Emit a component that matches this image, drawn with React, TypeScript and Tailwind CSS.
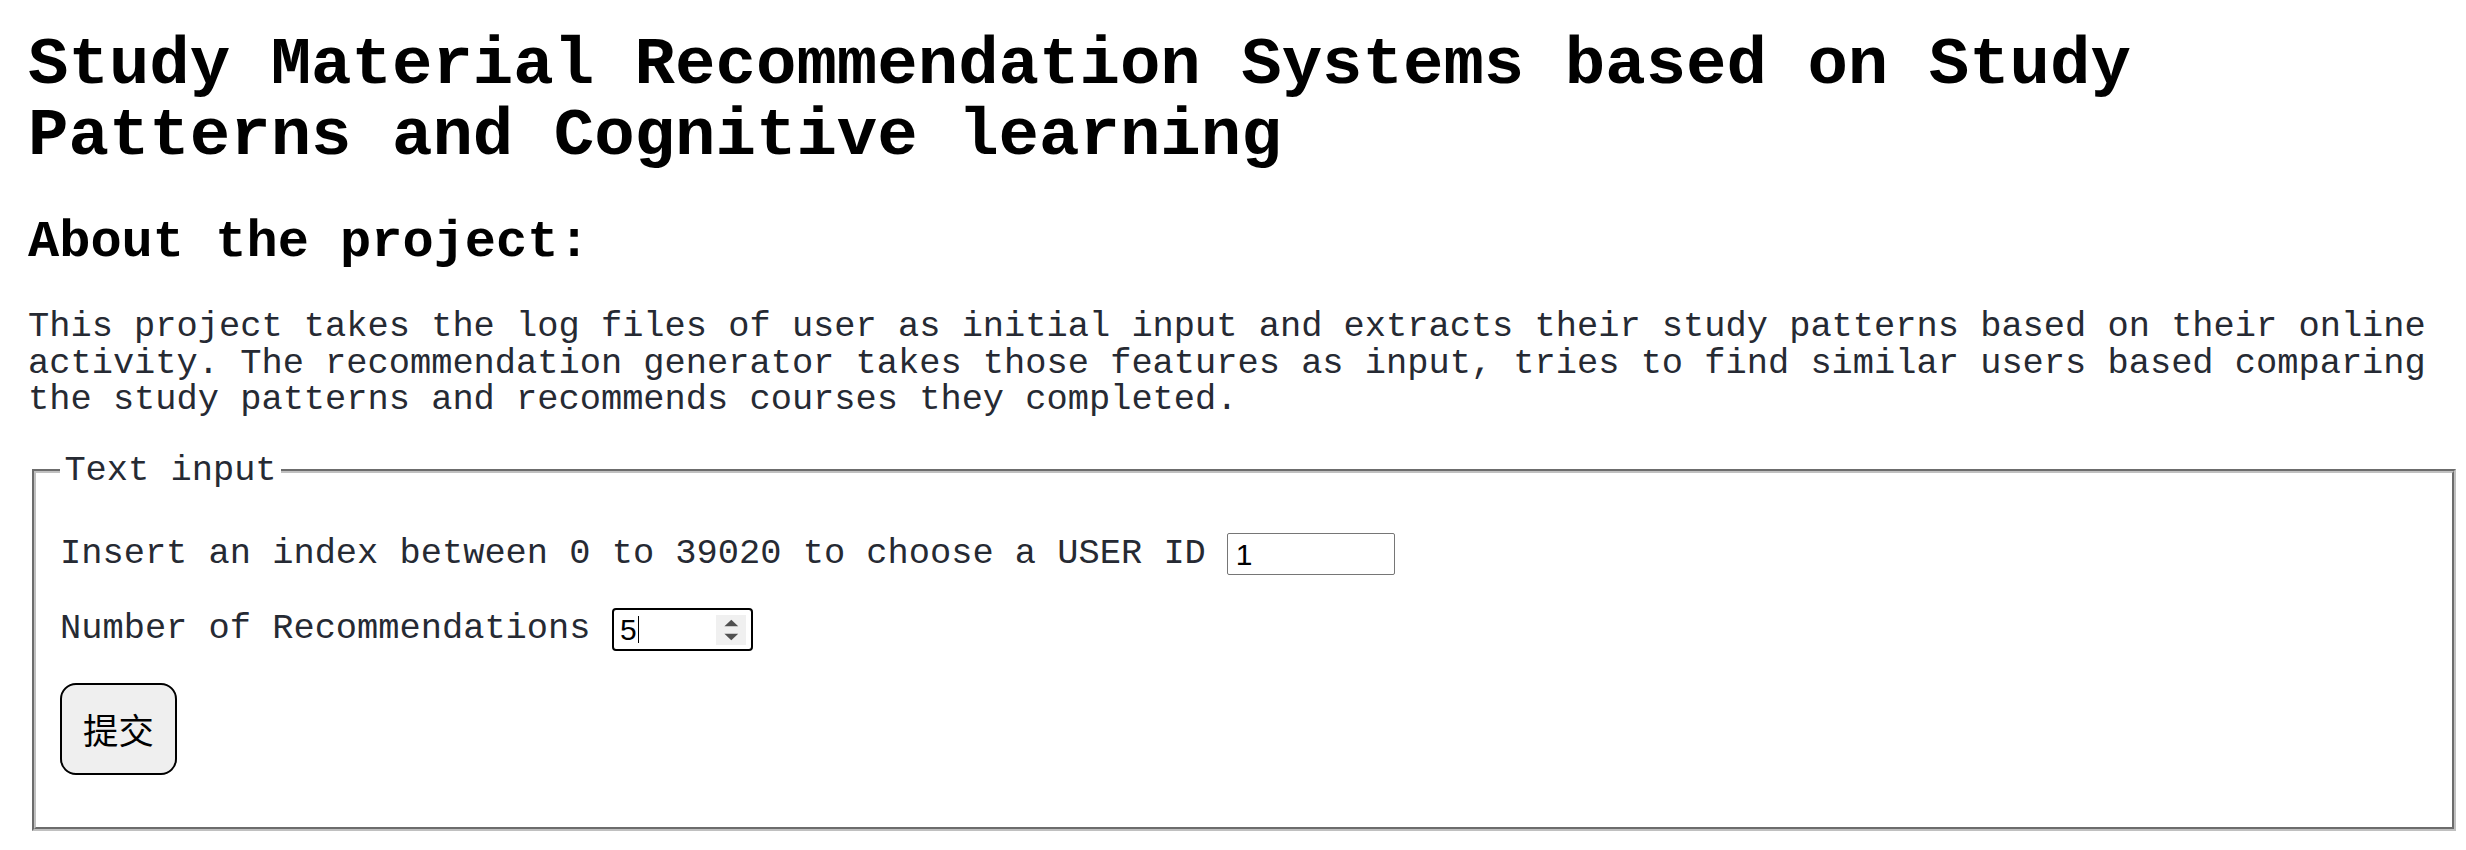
import { useState } from 'react';

function NumberBox({ value }: { value: number }) {
  return (
    <div className="ml-[21.6px] flex h-[42.4px] w-[141.2px] items-center rounded-[4px] border-2 border-black bg-white pl-[6px] pr-[5px]">
      <span className="font-[family-name:'Liberation_Sans',Arial,sans-serif] text-[30px] leading-none text-black">{value}</span>
      <span className="ml-[1px] h-[27px] w-[1.5px] bg-black" />
      <div className="ml-auto flex h-[30px] w-[30px] items-center justify-center bg-[#f0f0f0]">
        <svg width="30" height="30" viewBox="0 0 30 30">
          <polygon points="8.4,11.3 22.2,11.3 15.3,4.7" fill="#505050" />
          <polygon points="8.4,18.7 22.2,18.7 15.3,25.3" fill="#505050" />
        </svg>
      </div>
    </div>
  );
}

export default function App() {
  const [userId, setUserId] = useState('1');

  return (
    <div className="min-h-screen bg-white pl-[28px] pr-[6px] pt-[29.5px] font-['Courier_New','Liberation_Mono',monospace]">
      <h1 className="max-w-[2300px] text-[67.4px] font-bold leading-[71.7px] text-black">
        Study Material Recommendation Systems based on Study Patterns and Cognitive learning
      </h1>

      <h2 className="mt-[40.5px] text-[52px] font-bold leading-[59px] text-black">About the project:</h2>

      <p className="mt-[36.6px] text-[35.36px] leading-[36.7px] text-[#262a33]">
        This project takes the log files of user as initial input and extracts their study patterns based on their online
        activity. The recommendation generator takes those features as input, tries to find similar users based comparing
        the study patterns and recommends courses they completed.
      </p>

      <fieldset className="mx-[4px] mt-[34px] border-4 border-[#c0c0c0] px-[24px] pb-[52px] [border-style:groove]">
        <legend className="px-[4.4px] text-[35.36px] leading-[36.7px] text-[#262a33]">Text input</legend>

        {/* user id row */}
        <div className="mt-[43.6px] flex h-[42px] items-center">
          <span className="text-[35.36px] leading-[36.7px] text-[#262a33]">
            Insert an index between 0 to 39020 to choose a USER ID
          </span>
          <input
            type="text"
            value={userId}
            onChange={(e) => setUserId(e.target.value)}
            className="ml-[21px] h-[42px] w-[168.6px] rounded-[2px] border-[1.5px] border-[#767676] bg-white px-[8px] font-[family-name:'Liberation_Sans',Arial,sans-serif] text-[30px] text-black outline-none"
          />
        </div>

        {/* recommendations row */}
        <div className="mt-[33px] flex h-[42.4px] items-center">
          <span className="text-[35.36px] leading-[36.7px] text-[#262a33]">Number of Recommendations</span>
          <NumberBox value={5} />
        </div>

        <button
          type="button"
          className="mt-[32.6px] flex h-[91.4px] w-[117px] items-center justify-center rounded-[16px] border-2 border-black bg-[#efefef] font-[family-name:'Noto_Sans_CJK_SC',sans-serif] text-[35.4px] leading-none text-black"
        >
          提交
        </button>
      </fieldset>
    </div>
  );
}
